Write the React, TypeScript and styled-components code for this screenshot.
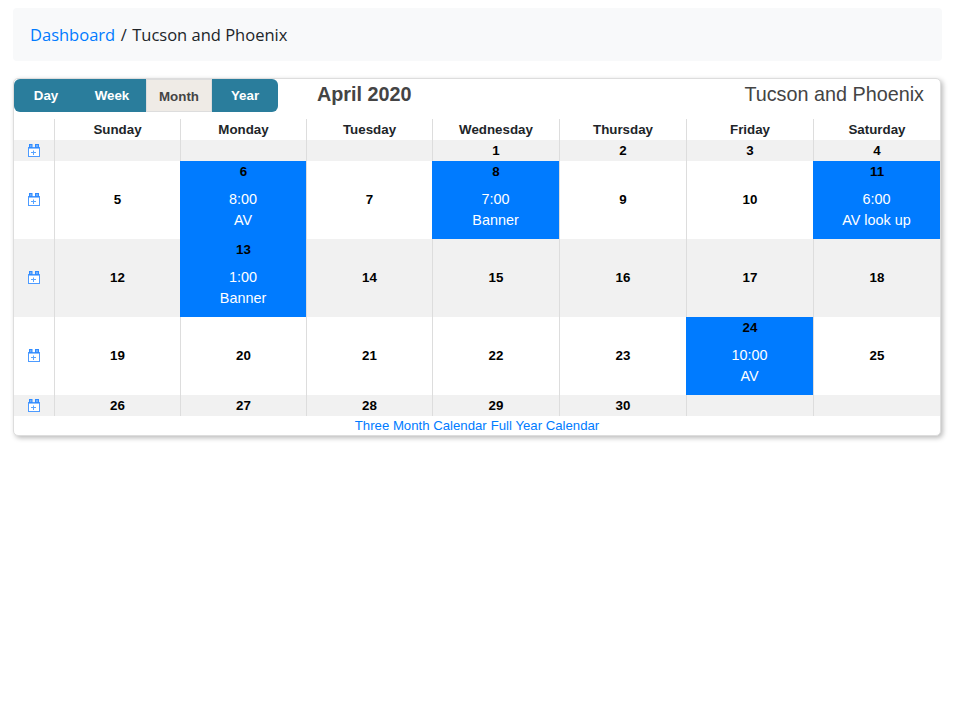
import React from "react";
import styled, { createGlobalStyle } from "styled-components";

const Global = createGlobalStyle`
  html, body { margin: 0; padding: 0; background: #fff; }
  body { font-family: "Open Sans", "Liberation Sans", sans-serif; color: #212529; }
  * { box-sizing: border-box; }
`;

const Page = styled.div`
  padding: 8px 13px 0;
  width: 955px;
  min-height: 727px;
`;

const Breadcrumb = styled.nav`
  width: 929px;
  height: 53px;
  padding: 0 17px;
  display: flex;
  align-items: center;
  gap: 5.5px;
  background: #f8f9fa;
  border-radius: 4px;
  font-size: 16.5px;
  margin-bottom: 17px;
`;

const Crumb = styled.a`
  color: #007bff;
  text-decoration: none;
`;

const Card = styled.section`
  width: 928px;
  height: 358px;
  border: 1px solid #ddd;
  border-radius: 5px;
  box-shadow: 2px 2px 5px #bbb;
  font-family: "Liberation Sans", Arial, sans-serif;
  background: #fff;
  display: flex;
  flex-direction: column;
`;

const Toolbar = styled.header`
  height: 40px;
  display: flex;
  align-items: flex-start;
`;

const ButtonGroup = styled.div`
  display: flex;
  width: 264px;
  height: 33px;
  background: #2a7d9c;
  border-radius: 6px;
  overflow: hidden;
`;

const ViewButton = styled.button<{ $active?: boolean; $w: number }>`
  width: ${(p) => p.$w}px;
  height: 33px;
  padding: ${(p) => (p.$active ? "1px 0 0" : "0")};
  font: bold 13.33px "Liberation Sans", Arial, sans-serif;
  color: ${(p) => (p.$active ? "#444" : "#fff")};
  background: ${(p) => (p.$active ? "#efebe6" : "transparent")};
  border: ${(p) => (p.$active ? "1px solid #ddd" : "none")};
`;

const Title = styled.h2`
  margin: 0 0 0 39px;
  font-size: 19.8px;
  line-height: 30px;
  font-weight: bold;
  color: #444;
`;

const Location = styled.div`
  margin-left: auto;
  margin-right: 16px;
  font-size: 19.8px;
  line-height: 30px;
  color: #444;
`;

const COLUMNS = "40px 126px 126px 126px 127px 127px 127px 127px";

const HeadRow = styled.div`
  display: grid;
  grid-template-columns: ${COLUMNS};
  height: 21px;
  flex: none;
`;

const HeadCell = styled.div`
  border-left: 1px solid #ddd;
  text-align: center;
  font-size: 13.33px;
  font-weight: bold;
  line-height: 21px;
  color: #212529;
  &:first-child { border-left: none; }
`;

const WeekRow = styled.div<{ $h: number; $shade?: boolean }>`
  display: grid;
  grid-template-columns: ${COLUMNS};
  flex: none;
  height: ${(p) => p.$h}px;
  background: ${(p) => (p.$shade ? "#f1f1f1" : "#fff")};
`;

const IconCell = styled.div`
  display: flex;
  align-items: center;
  justify-content: center;
  padding-bottom: 1px;
`;

const DayCell = styled.div<{ $event?: boolean; $tall?: boolean }>`
  border-left: 1px solid ${(p) => (p.$event ? "transparent" : "#ddd")};
  background: ${(p) => (p.$event ? "#007bff" : "transparent")};
  display: flex;
  flex-direction: column;
  align-items: center;
  justify-content: ${(p) => (p.$event ? "flex-start" : "center")};
  padding-bottom: ${(p) => (p.$tall ? "2px" : "0")};
  font-size: 13.33px;
  font-weight: bold;
  color: #000;
`;

const EventDate = styled.div`
  height: 21px;
  line-height: 21px;
  margin-bottom: 7px;
`;

const EventLine = styled.div`
  height: 21px;
  line-height: 21px;
  padding-right: 1px;
  font-size: 14.4px;
  font-weight: normal;
  color: #fff;
`;

const Footer = styled.footer`
  flex: none;
  height: 19px;
  display: flex;
  justify-content: center;
  gap: 4px;
  font-size: 13.2px;
  line-height: 20px;
`;

const FooterLink = styled.a`
  color: #007bff;
  text-decoration: none;
`;

const AddIcon = () => (
  <svg width="12" height="13" viewBox="0 0 12 13" fill="none">
    <rect x="0.5" y="3.5" width="11" height="9" fill="#fff" stroke="#4d9bff" />
    <path d="M1 4h10v1H1z" fill="#8fc0ff" />
    <rect x="1.5" y="0.5" width="2.5" height="3" fill="#6fb0ff" stroke="#2f8bff" />
    <rect x="7.5" y="0.5" width="3" height="3" fill="#6fb0ff" stroke="#2f8bff" />
    <path d="M5.5 6.5v4.5M3 8.5h5" stroke="#5aa5ff" />
  </svg>
);

type Day = { n?: number; time?: string; label?: string };

const weeks: { h: number; days: Day[] }[] = [
  { h: 21, days: [{}, {}, {}, { n: 1 }, { n: 2 }, { n: 3 }, { n: 4 }] },
  {
    h: 78,
    days: [
      { n: 5 },
      { n: 6, time: "8:00", label: "AV" },
      { n: 7 },
      { n: 8, time: "7:00", label: "Banner" },
      { n: 9 },
      { n: 10 },
      { n: 11, time: "6:00", label: "AV look up" },
    ],
  },
  {
    h: 78,
    days: [
      { n: 12 },
      { n: 13, time: "1:00", label: "Banner" },
      { n: 14 },
      { n: 15 },
      { n: 16 },
      { n: 17 },
      { n: 18 },
    ],
  },
  {
    h: 78,
    days: [
      { n: 19 },
      { n: 20 },
      { n: 21 },
      { n: 22 },
      { n: 23 },
      { n: 24, time: "10:00", label: "AV" },
      { n: 25 },
    ],
  },
  { h: 21, days: [{ n: 26 }, { n: 27 }, { n: 28 }, { n: 29 }, { n: 30 }, {}, {}] },
];

const dayNames = ["Sunday", "Monday", "Tuesday", "Wednesday", "Thursday", "Friday", "Saturday"];

export default function App() {
  return (
    <Page>
      <Global />
      <Breadcrumb>
        <Crumb href="#">Dashboard</Crumb>
        <span>/</span>
        <span>Tucson and Phoenix</span>
      </Breadcrumb>
      <Card>
        <Toolbar>
          <ButtonGroup>
            <ViewButton $w={64}>Day</ViewButton>
            <ViewButton $w={68}>Week</ViewButton>
            <ViewButton $w={66} $active>Month</ViewButton>
            <ViewButton $w={66}>Year</ViewButton>
          </ButtonGroup>
          <Title>April 2020</Title>
          <Location>Tucson and Phoenix</Location>
        </Toolbar>
        <HeadRow>
          <HeadCell />
          {dayNames.map((d) => (
            <HeadCell key={d}>{d}</HeadCell>
          ))}
        </HeadRow>
        {weeks.map((w, i) => (
          <WeekRow key={i} $h={w.h} $shade={i % 2 === 0}>
            <IconCell>
              <AddIcon />
            </IconCell>
            {w.days.map((d, j) =>
              d.time ? (
                <DayCell key={j} $event>
                  <EventDate>{d.n}</EventDate>
                  <EventLine>{d.time}</EventLine>
                  <EventLine>{d.label}</EventLine>
                </DayCell>
              ) : (
                <DayCell key={j} $tall={w.h > 21}>{d.n}</DayCell>
              )
            )}
          </WeekRow>
        ))}
        <Footer>
          <FooterLink href="#">Three Month Calendar</FooterLink>
          <FooterLink href="#">Full Year Calendar</FooterLink>
        </Footer>
      </Card>
    </Page>
  );
}
